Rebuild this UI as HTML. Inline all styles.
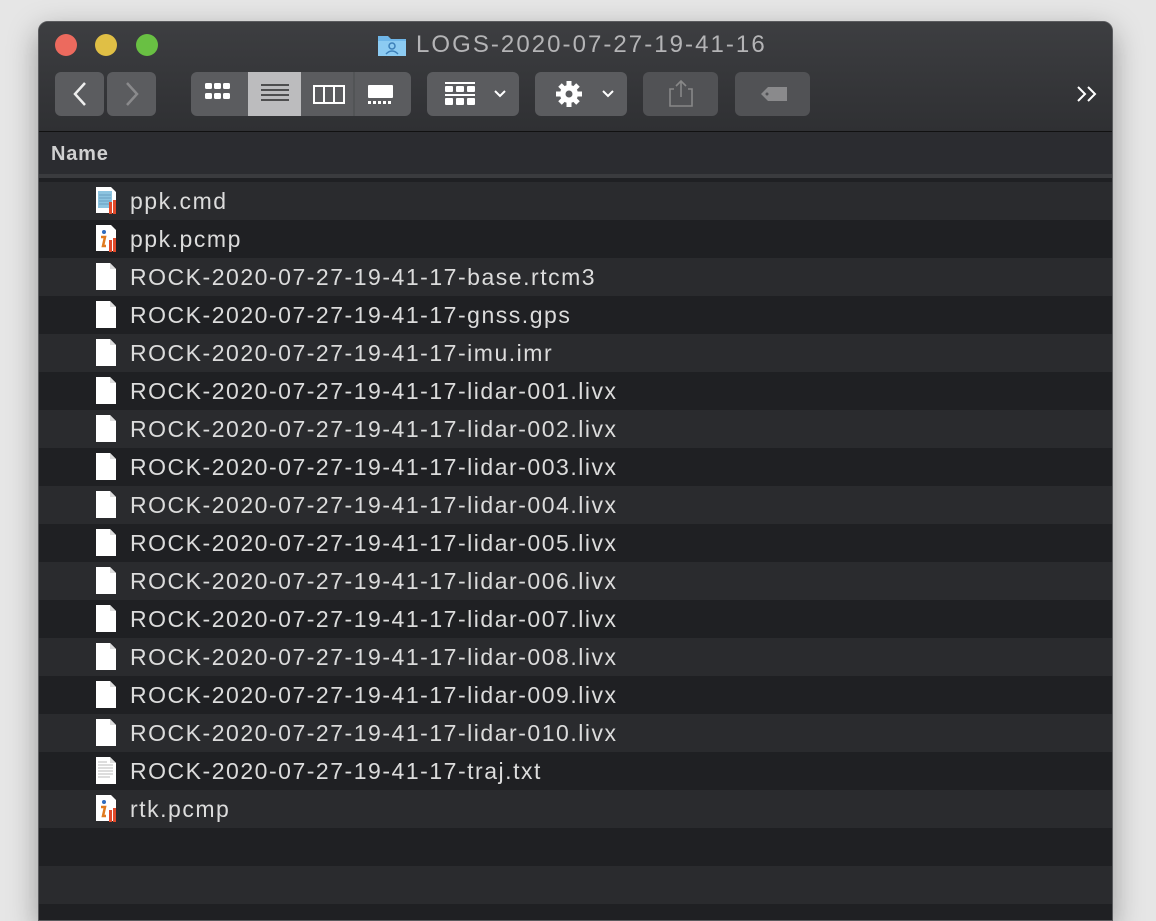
<!DOCTYPE html>
<html><head><style>
*{margin:0;padding:0;box-sizing:border-box}
body{width:1156px;height:916px;background:#e6e6e6;position:relative;overflow:hidden;font-family:"Liberation Sans",sans-serif}
.win{position:absolute;left:38px;top:21px;width:1075px;height:900px;background:#1f2023;border-radius:10px 10px 0 0;overflow:hidden;border:1px solid #5a5b5e;box-shadow:0 10px 30px rgba(0,0,0,.35)}
.tb{position:absolute;left:0;top:0;width:100%;height:110px;background:linear-gradient(#3d3e41,#2f3033);border-bottom:1px solid #111}
.dot{position:absolute;top:12px;width:22px;height:22px;border-radius:50%}
.title{position:absolute;top:9px;left:340px;color:#b4b4b6;font-size:24px;letter-spacing:2.05px}
.btn{position:absolute;top:50px;height:44px;background:#5b5c5f;border-radius:6px}
.hdr{position:absolute;top:110px;left:0;width:100%;height:46px;background:#2b2c30;border-bottom:4px solid #3a3b3e}
.hdr span{position:absolute;left:12px;top:11px;color:#d0d0d0;font-size:20px;font-weight:bold;letter-spacing:.8px}
.rows{position:absolute;top:160px;left:0;width:100%}
.r{height:38px;position:relative;color:#dcdcdc;font-size:23px;line-height:38px;letter-spacing:1.52px}
.r:nth-child(odd){background:#2a2b2e}
.r:nth-child(even){background:#1f2023}
.r span{position:absolute;left:91px;top:0}
.ic{position:absolute;left:56px;top:4px;width:22px;height:28px}
</style></head><body>
<div class="win">
<div class="tb">
<div class="dot" style="left:16px;background:#ec6a5e"></div>
<div class="dot" style="left:56px;background:#e0bf45"></div>
<div class="dot" style="left:97px;background:#69c043"></div>
<svg style="position:absolute;left:338px;top:11px" width="30" height="24"><path d="M1 3h10l3 3h15v17H1z" fill="#6fb6e8"/><rect x="1" y="8" width="28" height="15" fill="#8ccbf2"/><circle cx="15" cy="13" r="3" fill="none" stroke="#3c7fb8" stroke-width="1.5"/><path d="M9 21q6-6 12 0" fill="none" stroke="#3c7fb8" stroke-width="1.5"/></svg>
<div class="title" style="left:377px">LOGS-2020-07-27-19-41-16</div>
<div class="btn" style="left:16px;width:49px"><svg width="49" height="44"><path d="M30 11l-10 11 10 11" fill="none" stroke="#eee" stroke-width="2.5"/></svg></div>
<div class="btn" style="left:68px;width:49px"><svg width="49" height="44"><path d="M20 11l10 11-10 11" fill="none" stroke="#8a8a8c" stroke-width="2.5"/></svg></div>
<div class="btn" style="left:152px;width:220px;overflow:hidden">
<svg width="220" height="44">
<rect x="57" y="0" width="53" height="44" fill="#bcbcbe"/>
<line x1="163" y1="0" x2="163" y2="44" stroke="#4a4b4e"/>
<g fill="#fff"><rect x="14" y="11" width="7" height="6" rx="1.5"/><rect x="23" y="11" width="7" height="6" rx="1.5"/><rect x="32" y="11" width="7" height="6" rx="1.5"/><rect x="14" y="21" width="7" height="6" rx="1.5"/><rect x="23" y="21" width="7" height="6" rx="1.5"/><rect x="32" y="21" width="7" height="6" rx="1.5"/></g>
<g stroke="#2a2a2a" stroke-width="1.6"><line x1="70" y1="13" x2="98" y2="13"/><line x1="70" y1="18" x2="98" y2="18"/><line x1="70" y1="23" x2="98" y2="23"/><line x1="70" y1="28" x2="98" y2="28"/></g>
<rect x="123" y="14" width="30" height="17" fill="none" stroke="#fff" stroke-width="2"/><line x1="133" y1="14" x2="133" y2="31" stroke="#fff" stroke-width="2"/><line x1="143" y1="14" x2="143" y2="31" stroke="#fff" stroke-width="2"/>
<rect x="177" y="13" width="25" height="13" rx="1" fill="#fff"/><g fill="#fff"><rect x="177" y="29" width="3" height="3"/><rect x="182" y="29" width="3" height="3"/><rect x="187" y="29" width="3" height="3"/><rect x="192" y="29" width="3" height="3"/><rect x="197" y="29" width="3" height="3"/></g>
</svg></div>
<div class="btn" style="left:388px;width:92px"><svg width="92" height="44"><g fill="#fff"><rect x="18" y="10" width="30" height="2"/><rect x="18" y="14" width="8" height="6" rx="1"/><rect x="29" y="14" width="8" height="6" rx="1"/><rect x="40" y="14" width="8" height="6" rx="1"/><rect x="18" y="22" width="30" height="2"/><rect x="18" y="26" width="8" height="7" rx="1"/><rect x="29" y="26" width="8" height="7" rx="1"/><rect x="40" y="26" width="8" height="7" rx="1"/></g><path d="M68 19l5 5 5-5" fill="none" stroke="#fff" stroke-width="2"/></svg></div>
<div class="btn" style="left:496px;width:92px"><svg width="92" height="44"><g transform="translate(34,22)"><circle r="9" fill="#fff"/><g stroke="#fff" stroke-width="5"><line x1="0" y1="-13" x2="0" y2="13"/><line x1="-13" y1="0" x2="13" y2="0"/><line x1="-9" y1="-9" x2="9" y2="9"/><line x1="-9" y1="9" x2="9" y2="-9"/></g><circle r="3.5" fill="#5b5c5f"/></g><path d="M68 19l5 5 5-5" fill="none" stroke="#fff" stroke-width="2"/></svg></div>
<div class="btn" style="left:604px;width:75px;background:#515255"><svg width="75" height="44"><path d="M31 17h-4v17h22V17h-4M38 9v16M33 14l5-5 5 5" fill="none" stroke="#888" stroke-width="1.6"/></svg></div>
<div class="btn" style="left:696px;width:75px;background:#515255"><svg width="75" height="44"><path d="M26 22l7-7h19v14H33z" fill="#8a8a8c"/><circle cx="32" cy="22" r="1.5" fill="#515255"/></svg></div>
<svg style="position:absolute;left:1036px;top:62px" width="26" height="20"><path d="M3 3l7 7-7 7M13 3l7 7-7 7" fill="none" stroke="#fff" stroke-width="2"/></svg>
</div>
<div class="hdr"><span>Name</span></div>
<div class="rows">
<div class="r"><svg class="ic"><path d="M1 1h15l5 5v21H1z" fill="#fff"/><rect x="3" y="5" width="14" height="17" fill="#8cc4e0"/><g stroke="#5a8fb0" stroke-width=".7"><line x1="4" y1="9" x2="16" y2="9"/><line x1="4" y1="12" x2="16" y2="12"/><line x1="4" y1="15" x2="16" y2="15"/><line x1="4" y1="18" x2="16" y2="18"/></g><rect x="14" y="16" width="3" height="12" fill="#e04a2b"/><rect x="18" y="14" width="3" height="14" fill="#e04a2b"/></svg><span>ppk.cmd</span></div>
<div class="r"><svg class="ic"><path d="M1 1h15l5 5v21H1z" fill="#fff"/><circle cx="9" cy="8" r="2" fill="#2e6cc0"/><path d="M6 13h4l-2 9h3" fill="none" stroke="#e07b20" stroke-width="2.5"/><rect x="14" y="16" width="3" height="12" fill="#e04a2b"/><rect x="18" y="14" width="3" height="14" fill="#e04a2b"/></svg><span>ppk.pcmp</span></div>
<div class="r"><svg class="ic"><path d="M1 1h14l6 6v21H1z" fill="#fff"/><path d="M15 1v6h6" fill="#ddd"/></svg><span>ROCK-2020-07-27-19-41-17-base.rtcm3</span></div>
<div class="r"><svg class="ic"><path d="M1 1h14l6 6v21H1z" fill="#fff"/><path d="M15 1v6h6" fill="#ddd"/></svg><span>ROCK-2020-07-27-19-41-17-gnss.gps</span></div>
<div class="r"><svg class="ic"><path d="M1 1h14l6 6v21H1z" fill="#fff"/><path d="M15 1v6h6" fill="#ddd"/></svg><span>ROCK-2020-07-27-19-41-17-imu.imr</span></div>
<div class="r"><svg class="ic"><path d="M1 1h14l6 6v21H1z" fill="#fff"/><path d="M15 1v6h6" fill="#ddd"/></svg><span>ROCK-2020-07-27-19-41-17-lidar-001.livx</span></div>
<div class="r"><svg class="ic"><path d="M1 1h14l6 6v21H1z" fill="#fff"/><path d="M15 1v6h6" fill="#ddd"/></svg><span>ROCK-2020-07-27-19-41-17-lidar-002.livx</span></div>
<div class="r"><svg class="ic"><path d="M1 1h14l6 6v21H1z" fill="#fff"/><path d="M15 1v6h6" fill="#ddd"/></svg><span>ROCK-2020-07-27-19-41-17-lidar-003.livx</span></div>
<div class="r"><svg class="ic"><path d="M1 1h14l6 6v21H1z" fill="#fff"/><path d="M15 1v6h6" fill="#ddd"/></svg><span>ROCK-2020-07-27-19-41-17-lidar-004.livx</span></div>
<div class="r"><svg class="ic"><path d="M1 1h14l6 6v21H1z" fill="#fff"/><path d="M15 1v6h6" fill="#ddd"/></svg><span>ROCK-2020-07-27-19-41-17-lidar-005.livx</span></div>
<div class="r"><svg class="ic"><path d="M1 1h14l6 6v21H1z" fill="#fff"/><path d="M15 1v6h6" fill="#ddd"/></svg><span>ROCK-2020-07-27-19-41-17-lidar-006.livx</span></div>
<div class="r"><svg class="ic"><path d="M1 1h14l6 6v21H1z" fill="#fff"/><path d="M15 1v6h6" fill="#ddd"/></svg><span>ROCK-2020-07-27-19-41-17-lidar-007.livx</span></div>
<div class="r"><svg class="ic"><path d="M1 1h14l6 6v21H1z" fill="#fff"/><path d="M15 1v6h6" fill="#ddd"/></svg><span>ROCK-2020-07-27-19-41-17-lidar-008.livx</span></div>
<div class="r"><svg class="ic"><path d="M1 1h14l6 6v21H1z" fill="#fff"/><path d="M15 1v6h6" fill="#ddd"/></svg><span>ROCK-2020-07-27-19-41-17-lidar-009.livx</span></div>
<div class="r"><svg class="ic"><path d="M1 1h14l6 6v21H1z" fill="#fff"/><path d="M15 1v6h6" fill="#ddd"/></svg><span>ROCK-2020-07-27-19-41-17-lidar-010.livx</span></div>
<div class="r"><svg class="ic"><path d="M1 1h14l6 6v21H1z" fill="#fff"/><path d="M15 1v6h6" fill="#ddd"/><g stroke="#aaa" stroke-width=".8"><line x1="3" y1="6" x2="12" y2="6"/><line x1="3" y1="9" x2="18" y2="9"/><line x1="3" y1="12" x2="18" y2="12"/><line x1="3" y1="15" x2="18" y2="15"/><line x1="3" y1="18" x2="18" y2="18"/><line x1="3" y1="21" x2="15" y2="21"/></g></svg><span>ROCK-2020-07-27-19-41-17-traj.txt</span></div>
<div class="r"><svg class="ic"><path d="M1 1h15l5 5v21H1z" fill="#fff"/><circle cx="9" cy="8" r="2" fill="#2e6cc0"/><path d="M6 13h4l-2 9h3" fill="none" stroke="#e07b20" stroke-width="2.5"/><rect x="14" y="16" width="3" height="12" fill="#e04a2b"/><rect x="18" y="14" width="3" height="14" fill="#e04a2b"/></svg><span>rtk.pcmp</span></div>
<div class="r"></div>
<div class="r"></div>
<div class="r"></div>
</div>
</div>
</body></html>
